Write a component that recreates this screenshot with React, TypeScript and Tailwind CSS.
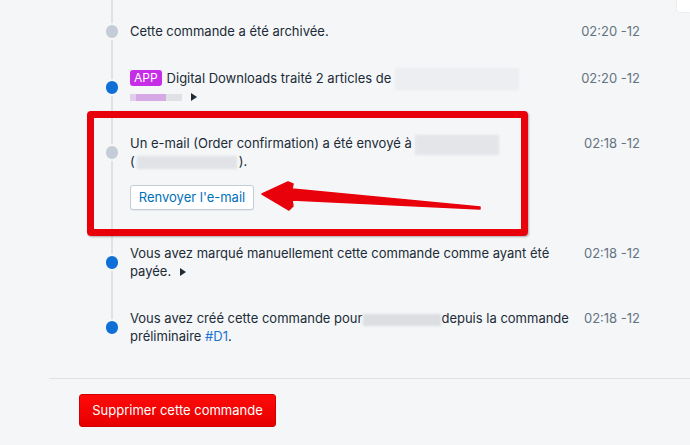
import React from "react";

const Caret = () => (
  <svg width="6" height="8" viewBox="0 0 6 8" className="inline-block ml-[9px] align-[0px]">
    <polygon points="0,0 6,4 0,8" fill="#212b36" />
  </svg>
);

function Dot({ gray }: { gray?: boolean }) {
  return (
    <div className="w-[16px] shrink-0 flex justify-center">
      <span
        className={
          "block h-[17px] w-[17px] rounded-full border-[2px] border-[#f4f6f8] " +
          (gray ? "bg-[#c4cdd5]" : "bg-[#0f6fd7]")
        }
      />
    </div>
  );
}

function Time({ children }: { children: React.ReactNode }) {
  return <div className="w-[62px] shrink-0 whitespace-nowrap text-right text-[#637381]">{children}</div>;
}

function Blur({ className }: { className: string }) {
  return <span className={"inline-block align-middle blur-[1px] " + className} />;
}

export default function App() {
  return (
    <div className="relative h-[445px] w-[690px] overflow-hidden bg-[#f4f6f8] font-['Inter','Liberation_Sans',sans-serif] text-[13px] leading-[18px] text-[#212b36]">
      {/* corner of the next card */}
      <div className="absolute right-0 top-0 h-[12px] w-[13px] rounded-bl-[3px] bg-white shadow-[0_0_2px_rgba(0,0,0,0.12)]" />

      {/* timeline */}
      <div className="relative pl-[104px] pr-[50px] pt-[22px]">
        <div className="absolute left-[111px] top-0 h-[326px] w-[2px] bg-[#dfe3e8]" />

        <div className="relative flex items-center">
          <Dot gray />
          <div className="ml-[10px] flex-1">Cette commande a été archivée.</div>
          <Time>02:20 -12</Time>
        </div>

        <div className="relative mt-[29px] flex items-start">
          <div className="flex h-[36px] items-center"><Dot /></div>
          <div className="ml-[10px] flex-1 whitespace-nowrap">
            <span className="-my-[2px] mr-[5px] inline-block rounded-[3px] bg-[#c62de6] px-[4px] align-[1px] text-[12px] leading-[16px] text-white">APP</span>
            Digital Downloads traité 2 articles de{" "}
            <Blur className="-my-[3px] h-[22px] w-[124px] bg-[#eceef1]" />
            <br />
            <span className="inline-flex align-middle">
              <span className="block h-[7px] w-[6px] bg-[#e3cdec] blur-[0.5px]" />
              <span className="block h-[7px] w-[30px] bg-[#d6a9e6] blur-[0.5px]" />
              <span className="block h-[7px] w-[16px] bg-[#e0e1e4] blur-[0.5px]" />
            </span>
            <Caret />
          </div>
          <Time>02:20 -12</Time>
        </div>

        <div className="relative mt-[29px]">
          <div className="flex items-start">
            <div className="flex h-[36px] items-center"><Dot gray /></div>
            <div className="ml-[10px] flex-1 whitespace-nowrap">
              Un e-mail (Order confirmation) a été envoyé à{" "}
              <Blur className="-my-[3px] h-[20px] w-[84px] bg-[#e3e5e9]" />
              <br />
              (<Blur className="mx-[2px] h-[13px] w-[100px] bg-[#e1e3e7]" />).
            </div>
            <Time>02:18 -12</Time>
          </div>
          <button className="ml-[26px] mt-[15px] block h-[25px] w-[124px] rounded-[3px] border border-[#c4cdd5] bg-white text-[13px] leading-[23px] text-[#006fbb] shadow-[0_1px_0_rgba(22,29,37,0.05)]">
            Renvoyer l'e-mail
          </button>
        </div>

        <div className="relative mt-[34px] flex items-start">
          <div className="flex h-[36px] items-center"><Dot /></div>
          <div className="ml-[10px] flex-1 whitespace-nowrap">
            Vous avez marqué manuellement cette commande comme ayant été
            <br />
            payée.
            <Caret />
          </div>
          <Time>02:18 -12</Time>
        </div>

        <div className="relative mt-[29px] flex items-start">
          <div className="flex h-[36px] items-center"><Dot /></div>
          <div className="ml-[10px] flex-1 whitespace-nowrap">
            Vous avez créé cette commande pour
            <Blur className="ml-[1px] h-[12px] w-[78px] bg-[#dcdee1]" />
            depuis la commande
            <br />
            préliminaire <span className="text-[#1a73d4]">#D1</span>.
          </div>
          <Time>02:18 -12</Time>
        </div>
      </div>

      <div className="ml-[49px] mt-[33px] border-t border-[#dfe3e8]" />

      <div className="pl-[79px] pt-[15px]">
        <button className="block h-[33px] w-[197px] rounded-[3px] border border-[#d00000] bg-gradient-to-b from-[#ff0a0a] to-[#e60000] text-[13px] leading-[31px] text-white">
          Supprimer cette commande
        </button>
      </div>

      {/* annotation */}
      <div className="absolute left-[87px] top-[111px] h-[125px] w-[441px] rounded-[4px] border-[7px] border-[#e8000b] shadow-[1px_1px_2px_rgba(0,0,0,0.3)]" />
      <svg className="absolute left-0 top-0" width="690" height="445" viewBox="0 0 690 445">
        <polygon
          points="262,194 288,182 293,184 292,189 480,207 480,209 292,200 293,206 289,210"
          fill="#e8000b"
          stroke="#e8000b"
          strokeWidth="1.5"
          strokeLinejoin="round"
        />
      </svg>
    </div>
  );
}
